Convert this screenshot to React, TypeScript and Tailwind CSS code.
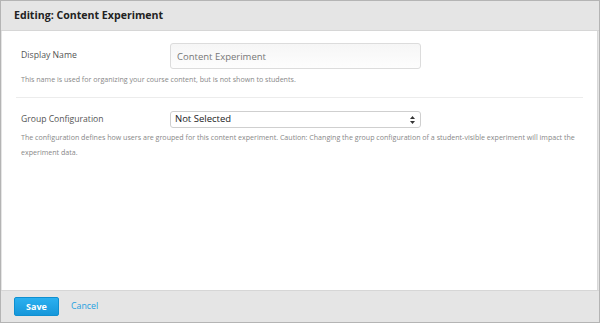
const App = () => {
  return (
    <div
      className="flex h-[323px] w-[600px] flex-col border border-[#b4b4b4] bg-[#e5e5e5]"
      style={{ fontFamily: '"Open Sans", "Liberation Sans", sans-serif' }}
    >
      <header className="flex h-[30px] items-center border-b border-[#d6d6d6] px-[13px]">
        <h1 className="text-[10.6px] font-bold text-[#222]">Editing: Content Experiment</h1>
      </header>

      <div className="mr-[1px] ml-[1px] flex-1 border-r border-[#d8d8d8] bg-white px-[14px]">
        <div className="border-b border-[#ececec] px-[5px] pt-[12px] pb-[11px]">
          <div className="flex items-center">
            <label className="w-[149px] text-[8.7px] text-[#555]">Display Name</label>
            <input
              type="text"
              defaultValue="Content Experiment"
              className="h-[26px] w-[251px] rounded-[3px] border border-[#dcdcdc] bg-gradient-to-b from-[#f6f6f6] to-[#fdfdfd] px-[6px] text-[9.5px] text-[#777] outline-none"
            />
          </div>
          <p className="mt-[3px] text-[7.1px] leading-[14px] text-[#888]">
            This name is used for organizing your course content, but is not shown to students.
          </p>
        </div>

        <div className="px-[5px] pt-[13px]">
          <div className="flex items-center">
            <label className="w-[149px] text-[8.6px] text-[#555]">Group Configuration</label>
            <div className="relative flex h-[17px] w-[251px] items-center rounded-[3px] border border-[#cfcfcf] bg-white px-[4px]">
              <span className="text-[9.5px] text-[#222]">Not Selected</span>
              <svg className="absolute top-[4px] right-[5px]" width="5" height="8" viewBox="0 0 5 8">
                <path d="M2.5 0 L5 3 L0 3 Z" fill="#333" />
                <path d="M2.5 8 L5 5 L0 5 Z" fill="#333" />
              </svg>
            </div>
          </div>
          <p className="mt-[2px] text-[7.1px] leading-[15px] text-[#888]">
            The configuration defines how users are grouped for this content experiment. Caution: Changing the group
            configuration of a student-visible experiment will impact the experiment data.
          </p>
        </div>
      </div>

      <footer className="flex h-[32px] items-center gap-[12px] border-t border-[#d6d6d6] px-[13px]">
        <button className="h-[19px] w-[45px] rounded-[2px] border border-[#0e8fd0] bg-gradient-to-b from-[#2bb0f0] to-[#1597da] text-[9px] font-bold text-white">
          Save
        </button>
        <a href="#" className="text-[8.8px] text-[#1e9fe0]">
          Cancel
        </a>
      </footer>
    </div>
  );
};

export default App;
